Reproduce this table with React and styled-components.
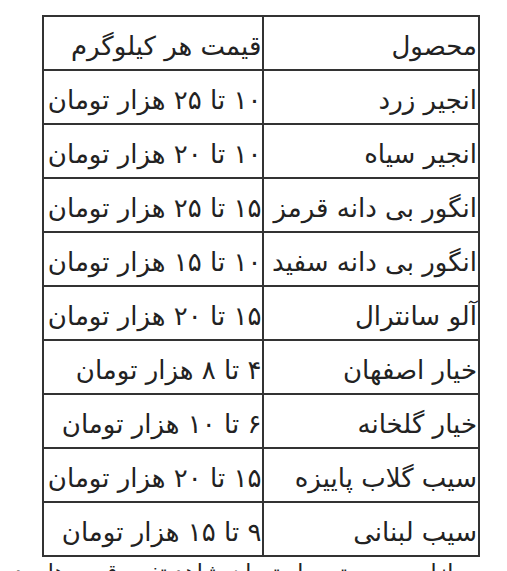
import React from "react";
import styled, { createGlobalStyle } from "styled-components";

const GlobalStyle = createGlobalStyle`
  html, body {
    margin: 0;
    padding: 0;
    background: #ffffff;
  }
  body {
    font-family: "DejaVu Sans", "Noto Sans", sans-serif;
    color: #222222;
  }
`;

const rows = [
  { name: "انجیر زرد", price: "۱۰ تا ۲۵ هزار تومان" },
  { name: "انجیر سیاه", price: "۱۰ تا ۲۰ هزار تومان" },
  { name: "انگور بی دانه قرمز", price: "۱۵ تا ۲۵ هزار تومان" },
  { name: "انگور بی دانه سفید", price: "۱۰ تا ۱۵ هزار تومان" },
  { name: "آلو سانترال", price: "۱۵ تا ۲۰ هزار تومان" },
  { name: "خیار اصفهان", price: "۴ تا ۸ هزار تومان" },
  { name: "خیار گلخانه", price: "۶ تا ۱۰ هزار تومان" },
  { name: "سیب گلاب پاییزه", price: "۱۵ تا ۲۰ هزار تومان" },
  { name: "سیب لبنانی", price: "۹ تا ۱۵ هزار تومان" },
];

const Page = styled.div`
  direction: rtl;
  padding: 15px 27px 0 42px;
  height: 571px;
  overflow: hidden;
  box-sizing: border-box;
`;

const Table = styled.table`
  table-layout: fixed;
  border-collapse: collapse;
  border: 2px solid #333333;
`;

const Cell = styled.td`
  width: ${({ $w }) => $w}px;
  height: 46px;
  padding: 6px 1px 0 1px;
  border: 2px solid #333333;
  text-align: right;
  vertical-align: middle;
  font-size: 26px;
  line-height: 1;
  letter-spacing: -0.4px;
  white-space: nowrap;
  overflow: hidden;
  color: #222222;
`;

const Note = styled.p`
  margin: 2px 0 0;
  padding-right: 20px;
  font-size: 22px;
  line-height: 1.3;
  white-space: nowrap;
  color: #222222;
`;

export default function App() {
  return (
    <>
      <GlobalStyle />
      <Page>
        <Table>
          <tbody>
            <tr>
              <Cell $w={213}>محصول</Cell>
              <Cell $w={217}>قیمت هر کیلوگرم</Cell>
            </tr>
            {rows.map((r) => (
              <tr key={r.name}>
                <Cell $w={213}>{r.name}</Cell>
                <Cell $w={217}>{r.price}</Cell>
              </tr>
            ))}
          </tbody>
        </Table>
        <Note>بازار میوه و تره بار تهران شاهد تغییر قیمت‌ها بوده است</Note>
      </Page>
    </>
  );
}
